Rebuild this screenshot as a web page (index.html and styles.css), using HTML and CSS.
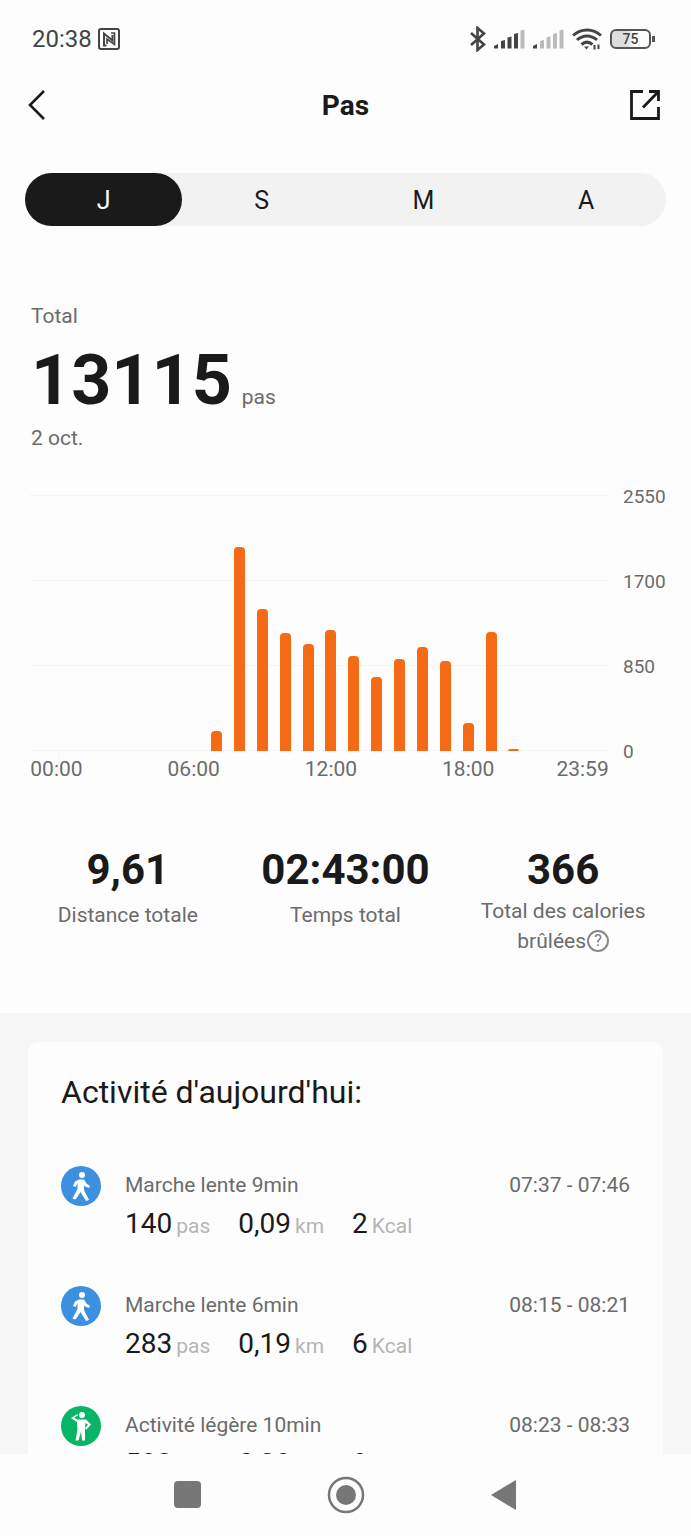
FILE: index.html
```html
<!DOCTYPE html>
<html lang="fr">
<head>
    <meta charset="UTF-8">
    <meta name="viewport" content="width=device-width, initial-scale=1.0">
    <title>Pas</title>
    <link rel="stylesheet" href="styles.css">
</head>
<body>

<div class="status-bar">
    <div class="status-left">
        <span>20:38</span>
        <svg width="22" height="22" viewBox="0 0 22 22" fill="none" stroke="#444" stroke-width="2">
            <rect x="1" y="1" width="20" height="20" rx="2"/>
            <path d="M6 18V5.500l8.500 7V7M8.500 17.500H5"/>
            <path d="M13 5h3.500v11.500L9 11v5" stroke-width="1.600"/>
        </svg>
    </div>
    <div class="status-right">
        <svg width="16" height="26" viewBox="0 0 16 26" fill="none" stroke="#444" stroke-width="2.600">
            <path d="M1 7l13 11.500-6.500 5.500V2L14 7.500 1 19"/>
        </svg>
        <svg width="31" height="20" viewBox="0 0 31 20" fill="#444">
            <path d="M0 19.500v-2.500l4-2v4.500zM7 12l4-1v8.500H7zM13.500 8.500l4-1v12h-4zM20 5l4-1v15.500h-4z"/>
            <path d="M26.500 1.500l4-1v19h-4z" fill="#bbb"/>
        </svg>
        <svg width="31" height="20" viewBox="0 0 31 20" fill="#bbb">
            <path d="M0 19.500v-2.500l4-2v4.500z" fill="#444"/>
            <path d="M7 12l4-1v8.500H7zM13.500 8.500l4-1v12h-4zM20 5l4-1v15.500h-4zM26.500 1.500l4-1v19h-4z"/>
        </svg>
        <svg width="30" height="22" viewBox="0 0 30 22" fill="none" stroke="#444" stroke-width="3">
            <path d="M1 7.500c8-7.500 20-7.500 28 0M5 12c6-5.500 14-5.500 20 0M9.500 16.500c3.500-3 7.500-3 11 0"/>
            <path d="M12 18.500h5l-2.500 3z" fill="#444" stroke="none"/>
            <path d="M22.500 17v4.500M26.500 16.500v4.500" stroke-width="2"/>
        </svg>
        <div class="battery"><span class="battery-level">75</span></div>
    </div>
</div>

<header class="header">
    <button class="icon-button" aria-label="Retour">
        <svg width="20" height="32" viewBox="0 0 20 32" fill="none" stroke="#1a1a1a" stroke-width="2.600">
            <path d="M18 2L4 16l14 14"/>
        </svg>
    </button>
    <h1>Pas</h1>
    <button class="icon-button" aria-label="Partager">
        <svg width="32" height="32" viewBox="0 0 32 32" fill="none" stroke="#1a1a1a" stroke-width="2.800">
            <path d="M14 2.500H2.500v27h27V18"/>
            <path d="M14 18.500L29 3M20 2.500h9.500V12"/>
        </svg>
    </button>
</header>

<nav class="tabs">
    <button class="tab active">J</button>
    <button class="tab">S</button>
    <button class="tab">M</button>
    <button class="tab">A</button>
</nav>

<main class="content">
    <section class="summary">
        <div class="summary-label">Total</div>
        <div class="summary-value"><strong>13115</strong><span>pas</span></div>
        <div class="summary-label">2 oct.</div>
    </section>

    <section class="chart">
        <div class="plot">
            <div class="bar" style="--steps: 0"></div>
            <div class="bar" style="--steps: 0"></div>
            <div class="bar" style="--steps: 0"></div>
            <div class="bar" style="--steps: 0"></div>
            <div class="bar" style="--steps: 0"></div>
            <div class="bar" style="--steps: 0"></div>
            <div class="bar" style="--steps: 0"></div>
            <div class="bar" style="--steps: 195"></div>
            <div class="bar" style="--steps: 2030"></div>
            <div class="bar" style="--steps: 1410"></div>
            <div class="bar" style="--steps: 1180"></div>
            <div class="bar" style="--steps: 1065"></div>
            <div class="bar" style="--steps: 1205"></div>
            <div class="bar" style="--steps: 945"></div>
            <div class="bar" style="--steps: 735"></div>
            <div class="bar" style="--steps: 920"></div>
            <div class="bar" style="--steps: 1035"></div>
            <div class="bar" style="--steps: 895"></div>
            <div class="bar" style="--steps: 280"></div>
            <div class="bar" style="--steps: 1185"></div>
            <div class="bar" style="--steps: 20"></div>
            <div class="bar" style="--steps: 0"></div>
            <div class="bar" style="--steps: 0"></div>
            <div class="bar" style="--steps: 0"></div>
        </div>
        <div class="y-axis">
            <span>2550</span>
            <span>1700</span>
            <span>850</span>
            <span>0</span>
        </div>
        <div class="x-axis">
            <span class="h0">00:00</span>
            <span class="h6">06:00</span>
            <span class="h12">12:00</span>
            <span class="h18">18:00</span>
            <span class="h23">23:59</span>
        </div>
    </section>

    <section class="stats">
        <div class="stat">
            <div class="stat-value">9,61</div>
            <div class="stat-label">Distance totale</div>
        </div>
        <div class="stat">
            <div class="stat-value">02:43:00</div>
            <div class="stat-label">Temps total</div>
        </div>
        <div class="stat">
            <div class="stat-value">366</div>
            <div class="stat-label two-lines">Total des calories brûlées<button class="help" aria-label="Aide">?</button></div>
        </div>
    </section>

    <section class="activities">
        <div class="card">
            <h2>Activité d'aujourd'hui:</h2>

            <div class="activity">
                <svg class="activity-icon walk" viewBox="0 0 40 40">
                    <circle cx="21" cy="9" r="3"/>
                    <path d="M18 13.500h5l2.500 4 3 2v2.500l-4.500-1.500-1-1v4.500l5 10-3 1-5.500-9-5 7.500-3-1 5-9.500v-6l-2 4-2.500-1 2-4.500z"/>
                </svg>
                <div class="activity-body">
                    <div class="activity-head"><span>Marche lente 9min</span><time>07:37 - 07:46</time></div>
                    <div class="activity-data">
                        <span>140<small>pas</small></span>
                        <span>0,09<small>km</small></span>
                        <span>2<small>Kcal</small></span>
                    </div>
                </div>
            </div>

            <div class="activity">
                <svg class="activity-icon walk" viewBox="0 0 40 40">
                    <circle cx="21" cy="9" r="3"/>
                    <path d="M18 13.500h5l2.500 4 3 2v2.500l-4.500-1.500-1-1v4.500l5 10-3 1-5.500-9-5 7.500-3-1 5-9.500v-6l-2 4-2.500-1 2-4.500z"/>
                </svg>
                <div class="activity-body">
                    <div class="activity-head"><span>Marche lente 6min</span><time>08:15 - 08:21</time></div>
                    <div class="activity-data">
                        <span>283<small>pas</small></span>
                        <span>0,19<small>km</small></span>
                        <span>6<small>Kcal</small></span>
                    </div>
                </div>
            </div>

            <div class="activity">
                <svg class="activity-icon light" viewBox="0 0 40 40">
                    <circle cx="21" cy="9" r="3"/>
                    <path d="M17 9.500l-4 2 3 2h9l5 5-4.500 5-1.500-1 3-4-2.500-1.500-.5 6.500v11h-3l-1-9-2.500 9h-3l2-11-.5-7.500-6-4 6.500-4z"/>
                </svg>
                <div class="activity-body">
                    <div class="activity-head"><span>Activité légère 10min</span><time>08:23 - 08:33</time></div>
                    <div class="activity-data">
                        <span>583<small>pas</small></span>
                        <span>0,38<small>km</small></span>
                        <span>8<small>Kcal</small></span>
                    </div>
                </div>
            </div>
        </div>
    </section>
</main>

<footer class="nav-bar">
    <button class="icon-button" aria-label="Applications">
        <svg width="38" height="38" viewBox="0 0 38 38" fill="#777"><rect x="5" y="5" width="27" height="27" rx="4"/></svg>
    </button>
    <button class="icon-button" aria-label="Accueil">
        <svg width="38" height="38" viewBox="0 0 38 38" fill="#777">
            <circle cx="19" cy="19" r="17" fill="none" stroke="#777" stroke-width="2.500"/>
            <circle cx="19" cy="19" r="10"/>
        </svg>
    </button>
    <button class="icon-button" aria-label="Précédent">
        <svg width="38" height="38" viewBox="0 0 38 38" fill="#777"><path d="M6 19L31 4v30z"/></svg>
    </button>
</footer>

</body>
</html>
```
FILE: styles.css
```css
* {
    box-sizing: border-box;
}

body {
    font-family: Roboto, sans-serif;
    margin: 0;
    height: 100vh;
    display: flex;
    flex-direction: column;
    overflow: hidden;
    background-color: #fdfdfd;
    color: #1a1a1a;
    font-size: 21px;
}

button {
    font: inherit;
    color: inherit;
    border: none;
    background: none;
    padding: 0;
    cursor: pointer;
}

svg {
    display: block;
}

/* Status bar */
.status-bar {
    flex: none;
    height: 77px;
    padding: 0 36px 0 32px;
    display: flex;
    justify-content: space-between;
    align-items: center;
    color: #444;
    font-size: 24px;
}

.status-left,
.status-right {
    display: flex;
    align-items: center;
    gap: 8px;
}

.status-left {
    gap: 6px;
}

.battery {
    width: 41px;
    height: 20px;
    border: 2px solid #555;
    border-radius: 6px;
    background: linear-gradient(to right, #ddd 40%, #fdfdfd 60%);
    text-align: center;
    position: relative;
    margin-right: 4px;
}

.battery::after {
    content: "";
    position: absolute;
    right: -6px;
    top: 5px;
    width: 3px;
    height: 6px;
    background-color: #555;
}

.battery-level {
    display: block;
    font-size: 14px;
    line-height: 16px;
    font-weight: 500;
}

/* Header */
.header {
    flex: none;
    height: 55px;
    padding: 0 30px 0 26px;
    display: grid;
    grid-template-columns: 36px 1fr 32px;
    align-items: center;
}

.header .icon-button {
    justify-self: start;
}

.header h1 {
    margin: 0;
    padding-top: 2px;
    font-size: 28px;
    font-weight: bold;
    text-align: center;
}

/* Tabs */
.tabs {
    flex: none;
    display: flex;
    height: 53px;
    margin: 41px 25px 0;
    border-radius: 27px;
    background-color: #f2f2f2;
}

.tab {
    flex: 1 1 auto;
    padding-top: 2px;
    border-radius: 27px;
    font-size: 25px;
}

.tab.active {
    background-color: #1a1a1a;
    color: #fff;
}

.content {
    flex: 1;
    min-height: 0;
    overflow: hidden;
}

/* Total */
.summary {
    padding: 76px 31px 0;
    color: #6b6b6b;
}

.summary-label {
    line-height: 28px;
}

.summary-value {
    line-height: 100px;
    height: 94px;
}

.summary-value strong {
    margin-right: 10px;
    font-size: 70px;
    color: #1a1a1a;
}

/* Chart */
.chart {
    display: grid;
    grid-template-columns: 1fr 43px;
    column-gap: 14px;
    padding: 43px 25px 0 30px;
    color: #6b6b6b;
}

.plot {
    height: 256px;
    padding: 0 15px;
    display: grid;
    grid-template-columns: repeat(24, 1fr);
    align-items: end;
    justify-items: center;
    background: repeating-linear-gradient(to bottom, #f4f4f4 0, #f4f4f4 1px, transparent 1px, transparent 85px);
}

.bar {
    width: 11px;
    height: calc(var(--steps) / 2550 * 100%);
    border-radius: 4px 4px 0 0;
    background-color: #f56a14;
}

.y-axis {
    display: flex;
    flex-direction: column;
    justify-content: space-between;
    margin: -9px 0 -12px;
    font-size: 19px;
    line-height: 22px;
}

.x-axis {
    display: grid;
    grid-template-columns: repeat(24, minmax(0, 1fr));
    padding: 0 15px;
    line-height: 36px;
}

.x-axis span {
    display: flex;
    justify-content: center;
}

.h0 { grid-column: 1; }
.h6 { grid-column: 7; }
.h12 { grid-column: 13; }
.h18 { grid-column: 19; }
.h23 { grid-column: 24; }

/* Stats */
.stats {
    display: grid;
    grid-template-columns: repeat(3, 1fr);
    padding: 57px 19px;
    text-align: center;
}

.stat-value {
    font-size: 42px;
    font-weight: bold;
    line-height: 52px;
}

.stat-label {
    color: #6b6b6b;
    line-height: 38px;
}

.stat-label.two-lines {
    line-height: 30px;
    padding: 0 20px;
}

.help {
    width: 22px;
    height: 22px;
    margin-left: 1px;
    border: 2px solid #888;
    border-radius: 50%;
    font-size: 16px;
    line-height: 18px;
    color: #777;
    vertical-align: 2px;
}

/* Activities */
.activities {
    background-color: #f6f6f6;
    padding: 29px 28px 0;
}

.card {
    background-color: #fdfdfd;
    border-radius: 10px;
    padding: 30px 33px;
}

.card h2 {
    margin: 0 0 54px;
    font-size: 32px;
    font-weight: normal;
    line-height: 40px;
}

.activity {
    display: flex;
    gap: 24px;
    height: 120px;
}

.activity-icon {
    flex: none;
    width: 40px;
    height: 40px;
    border-radius: 50%;
    fill: #fff;
}

.walk {
    background-color: #3d8fe0;
}

.light {
    background-color: #08b566;
}

.activity-body {
    flex: 1;
}

.activity-head {
    display: flex;
    justify-content: space-between;
    color: #6b6b6b;
    line-height: 38px;
}

.activity-data {
    display: flex;
    gap: 28px;
    font-size: 28px;
    line-height: 40px;
}

.activity-data small {
    margin-left: 4px;
    font-size: 21px;
    color: #b5b5b5;
}

/* Navigation bar */
.nav-bar {
    flex: none;
    height: 82px;
    display: grid;
    grid-template-columns: repeat(3, 158px);
    justify-content: center;
    justify-items: center;
    align-items: center;
    background-color: #fdfdfd;
}
```
